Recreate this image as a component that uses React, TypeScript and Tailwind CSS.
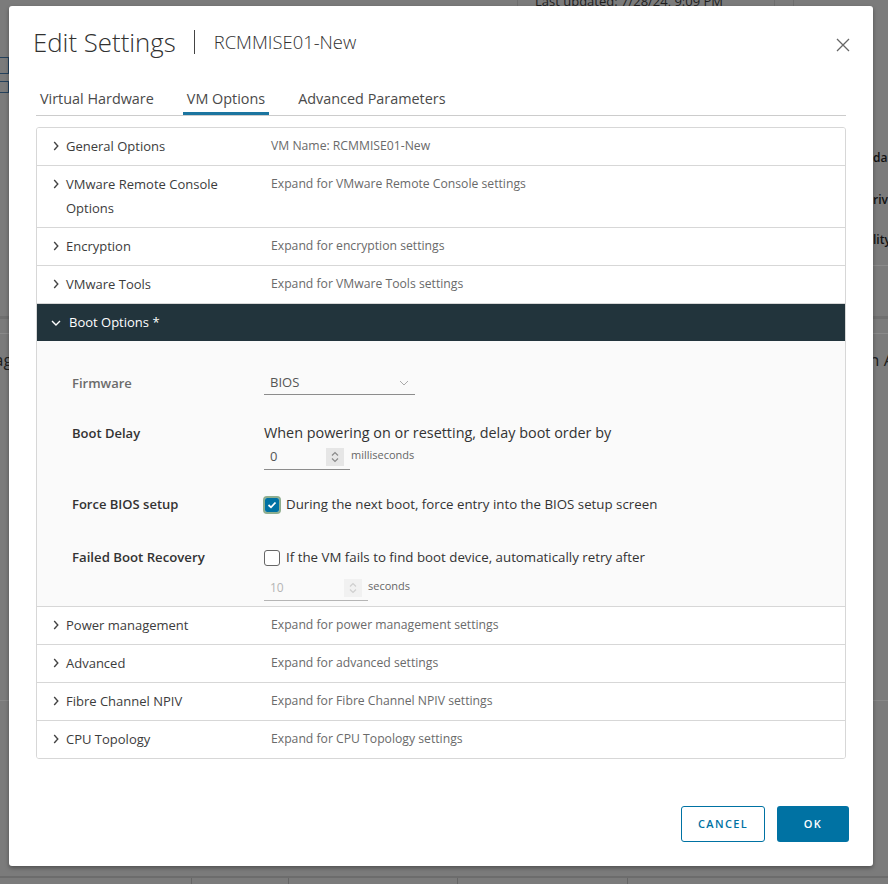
import React from 'react';

const Chevron: React.FC<{ open?: boolean; className?: string }> = ({ open = false, className = '' }) => (
  <svg width="10" height="10" viewBox="0 0 10 10" className={className} fill="none" stroke="currentColor" strokeWidth="1.4">
    {open ? <path d="M1 3 L5 7 L9 3" /> : <path d="M3.2 1 L6.8 5 L3.2 9" />}
  </svg>
);

const Spinner: React.FC<{ faded?: boolean }> = ({ faded }) => (
  <div className={`w-[18px] h-[18px] flex flex-col items-center justify-center ${faded ? 'bg-[#f1f1f1] text-[#cfcfcf]' : 'bg-[#e6e6e6] text-[#8a8a8a]'}`}>
    <svg width="8" height="12" viewBox="0 0 8 12" fill="none" stroke="currentColor" strokeWidth="1.2">
      <path d="M1 4.5 L4 1.5 L7 4.5" />
      <path d="M1 7.5 L4 10.5 L7 7.5" />
    </svg>
  </div>
);

const topRows = [
  { name: 'General Options', desc: 'VM Name: RCMMISE01-New' },
  { name: 'VMware Remote Console Options', desc: 'Expand for VMware Remote Console settings' },
  { name: 'Encryption', desc: 'Expand for encryption settings' },
  { name: 'VMware Tools', desc: 'Expand for VMware Tools settings' },
];

const bottomRows = [
  { name: 'Power management', desc: 'Expand for power management settings' },
  { name: 'Advanced', desc: 'Expand for advanced settings' },
  { name: 'Fibre Channel NPIV', desc: 'Expand for Fibre Channel NPIV settings' },
  { name: 'CPU Topology', desc: 'Expand for CPU Topology settings' },
];

const Row: React.FC<{ name: string; desc: string; last?: boolean }> = ({ name, desc, last }) => (
  <div className={`flex pt-[6px] pb-[7px] bg-white ${last ? '' : 'border-b border-[#d7d7d7]'}`}>
    <div className="w-[234px] pl-[14px] flex items-start gap-[5px]">
      <div className="h-[24px] flex items-center text-[#444]">
        <Chevron />
      </div>
      <div className="max-w-[180px] text-[13px] leading-[24px] text-[#3c3c3c]">{name}</div>
    </div>
    <div className="text-[12.2px] leading-[24px] text-[#6a6a6a]">{desc}</div>
  </div>
);

const App: React.FC = () => {
  return (
    <div className="relative w-[888px] h-[884px] overflow-hidden bg-[#7b7b7b] font-['Open_Sans',sans-serif]">
      {/* dimmed page behind the dialog */}
      <div className="absolute left-[517px] top-0 h-[12px] border-l border-[#6e6e6e]" />
      <div className="absolute left-[774px] top-0 h-[12px] border-l border-[#6e6e6e]" />
      <div className="absolute left-[793px] top-0 h-[12px] border-l border-[#6e6e6e]" />
      <div className="absolute left-[535px] top-[-8px] text-[13px] text-[#1e1e1e] whitespace-nowrap">Last updated: 7/28/24, 9:09 PM</div>
      <div className="absolute left-0 top-[57px] w-[9px] h-[17px] border border-[#24415c] border-l-0" />
      <div className="absolute left-0 top-[81px] w-[9px] h-[12px] border border-[#24415c] border-l-0" />
      <div className="absolute left-[873px] top-[150px] text-[12px] font-semibold text-[#111] leading-[16px]">dapter</div>
      <div className="absolute left-[873px] top-[192px] text-[12px] font-semibold text-[#111] leading-[16px]">rive</div>
      <div className="absolute left-[873px] top-[232px] text-[12px] font-semibold text-[#111] leading-[16px]">lity</div>
      <div className="absolute left-[873px] right-0 top-[265px] border-t border-[#8a8a8a]" />
      <div className="absolute left-0 right-0 top-[316px] h-[3px] bg-[#6f6f6f]" />
      <div className="absolute left-0 right-0 top-[333px] border-t border-[#8a8a8a]" />
      <div className="absolute left-[-6px] top-[347px] text-[17px] text-[#1e1e1e]">ag</div>
      <div className="absolute left-[869px] top-[347px] text-[17px] text-[#1e1e1e] whitespace-nowrap">n A</div>
      <div className="absolute left-0 right-0 top-[700px] border-t border-[#888]" />
      <div className="absolute left-0 right-0 top-[876px] border-t-2 border-[#6c6c6c]" />
      <div className="absolute left-[191px] top-[878px] h-[6px] border-l border-[#666]" />
      <div className="absolute left-[288px] top-[878px] h-[6px] border-l border-[#666]" />
      <div className="absolute left-[457px] top-[878px] h-[6px] border-l border-[#666]" />
      <div className="absolute left-[627px] top-[878px] h-[6px] border-l border-[#666]" />

      {/* dialog */}
      <div className="absolute left-[9px] top-[6px] w-[864px] h-[860px] bg-white rounded-[3px] shadow-[0_2px_4px_rgba(0,0,0,0.35)] flex flex-col">
        <div className="flex items-center h-[32px] mt-[20px] pl-[24px] pr-[24px]">
          <div className="text-[25.8px] font-light text-[#313131] leading-[32px]">Edit Settings</div>
          <div className="w-px h-[24px] bg-[#444] ml-[18px] mr-[19px]" />
          <div className="text-[18.4px] font-light text-[#313131] leading-[32px]">RCMMISE01-New</div>
          <button className="ml-auto mt-[6px] mr-[-2px] text-[#666]">
            <svg width="16" height="16" viewBox="0 0 16 16" fill="none" stroke="currentColor" strokeWidth="1.3">
              <path d="M2 2 L14 14 M14 2 L2 14" />
            </svg>
          </button>
        </div>

        <div className="mx-[27px] mt-[25px] flex gap-[25px] border-b border-[#cccccc]">
          <div className="h-[32px] px-[4px] flex items-center text-[14.4px] text-[#4a4a4a]">Virtual Hardware</div>
          <div className="h-[32px] px-[4px] flex items-center text-[14.4px] text-[#4a4a4a] shadow-[inset_0_-3px_0_#1b75a0]">VM Options</div>
          <div className="h-[32px] px-[4px] flex items-center text-[14.4px] text-[#4a4a4a]">Advanced Parameters</div>
        </div>

        <div className="mx-[27px] mt-[11px] border border-[#d7d7d7] rounded-[3px] overflow-hidden">
          {topRows.map((r) => (
            <Row key={r.name} name={r.name} desc={r.desc} />
          ))}

          <div className="h-[37px] bg-[#22343c] flex items-center pl-[14px] gap-[8px] text-white">
            <Chevron open />
            <span className="text-[13px]">Boot Options *</span>
          </div>

          <div className="bg-[#fafafa] pl-[35px] pt-[30px] pb-[5px] border-b border-[#d7d7d7]">
            <div className="flex">
              <div className="w-[192px] text-[13px] font-semibold leading-[24px] text-[#6b6b6b]">Firmware</div>
              <div className="w-[151px] h-[24px] border-b border-[#8c8c8c] flex items-center justify-between pl-[6px] pr-[6px]">
                <span className="text-[13px] text-[#555]">BIOS</span>
                <svg width="10" height="6" viewBox="0 0 10 6" fill="none" stroke="#aaa" strokeWidth="1">
                  <path d="M1 1 L5 5 L9 1" />
                </svg>
              </div>
            </div>

            <div className="flex mt-[26px]">
              <div className="w-[192px] text-[13px] font-semibold leading-[24px] text-[#333]">Boot Delay</div>
              <div>
                <div className="text-[14.4px] leading-[24px] text-[#333]">When powering on or resetting, delay boot order by</div>
                <div className="flex items-center">
                  <div className="w-[86px] h-[25px] border-b border-[#8c8c8c] flex items-center pl-[6px]">
                    <span className="text-[13px] text-[#555] w-[56px]">0</span>
                    <Spinner />
                  </div>
                  <span className="text-[11px] text-[#666] ml-[1px] mb-[4px]">milliseconds</span>
                </div>
              </div>
            </div>

            <div className="flex mt-[23px] items-center h-[24px]">
              <div className="w-[192px] text-[13px] font-semibold text-[#333]">Force BIOS setup</div>
              <div className="w-[18px] h-[18px] ml-[-1px] rounded-[4px] border-2 border-[#8fae8f] flex items-center justify-center">
                <div className="w-[14px] h-[14px] rounded-[2px] bg-[#0072a3] flex items-center justify-center">
                  <svg width="10" height="8" viewBox="0 0 10 8" fill="none" stroke="white" strokeWidth="1.8">
                    <path d="M1.5 4 L4 6.3 L8.5 1.5" />
                  </svg>
                </div>
              </div>
              <span className="ml-[5px] text-[13.3px] text-[#333]">During the next boot, force entry into the BIOS setup screen</span>
            </div>

            <div className="flex mt-[29px] items-center h-[24px]">
              <div className="w-[192px] text-[13.2px] font-semibold text-[#333]">Failed Boot Recovery</div>
              <div className="w-[16px] h-[16px] rounded-[3px] border border-[#666] bg-white" />
              <span className="ml-[6px] text-[13.3px] text-[#333]">If the VM fails to find boot device, automatically retry after</span>
            </div>
            <div className="flex items-center mt-[6px] ml-[192px]">
              <div className="w-[104px] h-[25px] border-b border-[#b5b5b5] flex items-center pl-[6px]">
                <span className="text-[12px] text-[#b5b5b5] w-[74px]">10</span>
                <Spinner faded />
              </div>
              <span className="text-[11px] text-[#666] ml-[0px] mb-[4px]">seconds</span>
            </div>
          </div>

          {bottomRows.map((r, i) => (
            <Row key={r.name} name={r.name} desc={r.desc} last={i === bottomRows.length - 1} />
          ))}
        </div>

        <div className="flex justify-end gap-[12px] mt-[47px] pr-[24px]">
          <button className="w-[84px] h-[36px] border border-[#0072a3] rounded-[3px] text-[11px] tracking-[0.12em] font-semibold text-[#0072a3]">CANCEL</button>
          <button className="w-[72px] h-[36px] bg-[#0072a3] rounded-[3px] text-[11px] tracking-[0.12em] font-semibold text-white">OK</button>
        </div>
      </div>
    </div>
  );
};

export default App;
